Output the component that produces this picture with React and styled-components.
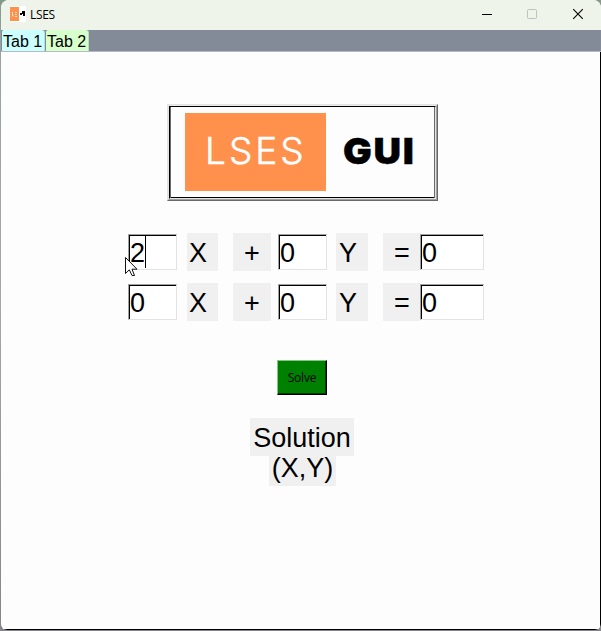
import React from 'react';
import styled, { createGlobalStyle } from 'styled-components';

const Global = createGlobalStyle`
  * { box-sizing: border-box; }
  body { margin: 0; background: #7d817f; overflow: hidden; }
`;

const Desktop = styled.div`
  width: 601px;
  height: 631px;
  padding: 0 0 1px 1px;
  background: linear-gradient(#83998a 0, #99a39c 40px, #a9a6a4 300px, #85858a 100%);
  font-family: 'Liberation Sans', Arial, sans-serif;
  color: #000;
`;

const Window = styled.main`
  width: 600px;
  height: 630px;
  display: flex;
  flex-direction: column;
  background: #fdfdfd;
  border-radius: 8px 8px 6px 6px;
  overflow: hidden;
`;

const TitleBar = styled.header`
  height: 30px;
  flex: none;
  display: flex;
  align-items: center;
  padding-left: 8px;
  background: #eff4eb;
`;

const Title = styled.span`
  flex: 1;
  margin-left: 3px;
  font: 12px/28px 'Open Sans', 'Noto Sans', sans-serif;
  letter-spacing: -0.3px;
`;

const AppIcon = styled.svg`
  width: 17px;
  height: 16px;
  margin-top: -2px;
  margin-left: 1px;
`;

const Controls = styled.svg`
  width: 141px;
  height: 30px;
`;

const TabBar = styled.nav`
  height: 22px;
  flex: none;
  display: flex;
  gap: 1px;
  padding-left: 1px;
  background: #848b98;
  border-bottom: 1px solid #b6bac5;
`;

const Tab = styled.button`
  width: 43px;
  height: 21px;
  padding: 0 0 0 1px;
  border: 0;
  border-radius: 2px 3px 0 0;
  background: ${({ $color }) => $color};
  box-shadow: inset -1px 0 rgba(60, 110, 90, 0.2);
  font: 16px/24px 'Liberation Sans', Arial, sans-serif;
  color: #000;
  text-align: left;
  white-space: nowrap;
`;

const Content = styled.section`
  flex: 1;
  display: flex;
  flex-direction: column;
  align-items: flex-start;
  border-right: 1px solid #000;
  border-bottom: 1px solid #000;
`;

const LogoFrame = styled.div`
  width: 271px;
  height: 97px;
  margin: 52px 0 0 166px;
  border: 1px solid;
  border-color: #e3e3e3 #696969 #696969 #e3e3e3;
`;

const LogoRidge = styled.div`
  height: 100%;
  border: 1px solid;
  border-color: #e9e9e9 #a0a0a0 #a0a0a0 #e3e3e3;
`;

const LogoGroove = styled.div`
  height: 100%;
  display: flex;
  border: 1px solid;
  border-color: #000 #e3e3e3 #e3e3e3 #000;
  box-shadow: inset 1px 0 #696969, inset -1px 0 #696969, inset 0 -1px #000;
  padding: 6px 0 0 15px;
`;

const LogoBlock = styled.div`
  width: 141px;
  height: 78px;
  padding-left: 20px;
  background: #ff914d;
  color: #fff;
  font: 300 37px/76px Inter, sans-serif;
  letter-spacing: 3px;
  -webkit-text-stroke: 0.5px #fff;
`;

const LogoWord = styled.div`
  margin-left: 17px;
  font: 900 36px/76px Inter, sans-serif;
  letter-spacing: 1.6px;
  transform: scaleX(1.06);
  transform-origin: left;
  -webkit-text-stroke: 0.4px #000;
`;

const Equation = styled.div`
  display: flex;
  align-items: center;
  height: 38px;
  margin: ${({ $top }) => $top}px 0 0 127px;
`;

const Label = styled.span`
  width: ${({ $width }) => $width}px;
  height: 38px;
  flex: none;
  margin-left: ${({ $gap = 0 }) => $gap}px;
  background: #f0f0f0;
  font-size: 27px;
  line-height: 40px;
  text-align: ${({ $align = 'center' }) => $align};
  padding-left: ${({ $pad = 0 }) => $pad}px;
`;

const Entry = styled.div`
  width: ${({ $width = 49 }) => $width}px;
  height: 36px;
  flex: none;
  margin-left: ${({ $gap = 0 }) => $gap}px;
  border: 1px solid;
  border-color: #a0a0a0 #e3e3e3 #e3e3e3 #a0a0a0;
  box-shadow: inset 1px 1px #000;
  background: #fff;
  padding-left: 1px;
  font-size: 27px;
  line-height: 37px;
  position: relative;
`;

const Caret = styled.i`
  position: absolute;
  left: 16px;
  top: 1px;
  width: 1px;
  height: 32px;
  background: #000;
`;

const Pointer = styled.svg`
  position: absolute;
  left: -4px;
  top: 22px;
  width: 14px;
  height: 21px;
  overflow: visible;
`;

const SolveButton = styled.button`
  width: 50px;
  height: 35px;
  margin: 39px 0 0 276px;
  padding: 0;
  border: 1px solid;
  border-color: #85c585 #000 #000 #85c585;
  box-shadow: inset -1px -1px #003b00;
  background: #008000;
  font: 12px/32px 'Open Sans', 'Noto Sans', sans-serif;
  letter-spacing: -0.2px;
  color: #000;
`;

const Result = styled.div`
  display: flex;
  flex-direction: column;
  align-items: center;
  width: 104px;
  margin: 23px 0 0 249px;
`;

const Value = styled.span`
  width: 67px;
  height: 30px;
  background: #f0f0f0;
  font-size: 27px;
  line-height: 24px;
  padding-left: 1px;
  text-align: center;
`;

function Row({ top, first, active }) {
  return (
    <Equation $top={top}>
      <Entry>
        {first}
        {active && <Caret />}
        {active && (
          <Pointer viewBox="0 0 14 21">
            <path
              d="M.5 .5V16.5L4.3 12.8L7 18.5H9.5L7 12.2H12Z"
              fill="#fff"
              stroke="#111"
            />
          </Pointer>
        )}
      </Entry>
      <Label $width={31} $gap={10} $align="left" $pad={2}>X</Label>
      <Label $width={38} $gap={15}>+</Label>
      <Entry $gap={7}>0</Entry>
      <Label $width={32} $gap={9} $align="left" $pad={3}>Y</Label>
      <Label $width={37} $gap={15} $pad={1}>=</Label>
      <Entry $width={64}>0</Entry>
    </Equation>
  );
}

export default function App() {
  return (
    <Desktop>
      <Global />
      <Window>
        <TitleBar>
          <AppIcon viewBox="0 0 17 16">
            <path fill="#fff" d="M0 0h16v16H0z" />
            <path fill="#ff914d" d="M0 1h9v14H0z" />
            <path stroke="#fff" strokeOpacity=".7" fill="none" d="M2.5 6v4h1M5 6.5h2M5 8.5h2M5 10.5h2" />
            <path d="M10 7h2V5h3v5h-2V8h-1v1h-2z" />
          </AppIcon>
          <Title>LSES</Title>
          <Controls viewBox="0 0 141 30" fill="none">
            <path d="M22 14.5h10" stroke="#000" />
            <rect x="67.5" y="9.5" width="9" height="9" rx="1" stroke="#bec2bb" />
            <path d="M113.2 9.2l9.6 9.6M122.8 9.2l-9.6 9.6" stroke="#000" strokeWidth="1.1" />
          </Controls>
        </TitleBar>
        <TabBar>
          <Tab $color="#ccffff">Tab 1</Tab>
          <Tab $color="#d7ffcb">Tab 2</Tab>
        </TabBar>
        <Content>
          <LogoFrame>
            <LogoRidge>
              <LogoGroove>
                <LogoBlock>LSES</LogoBlock>
                <LogoWord>GUI</LogoWord>
              </LogoGroove>
            </LogoRidge>
          </LogoFrame>
          <Row top={32} first="2" active />
          <Row top={12} first="0" />
          <SolveButton>Solve</SolveButton>
          <Result>
            <Label $width={104}>Solution</Label>
            <Value>(X,Y)</Value>
          </Result>
        </Content>
      </Window>
    </Desktop>
  );
}
